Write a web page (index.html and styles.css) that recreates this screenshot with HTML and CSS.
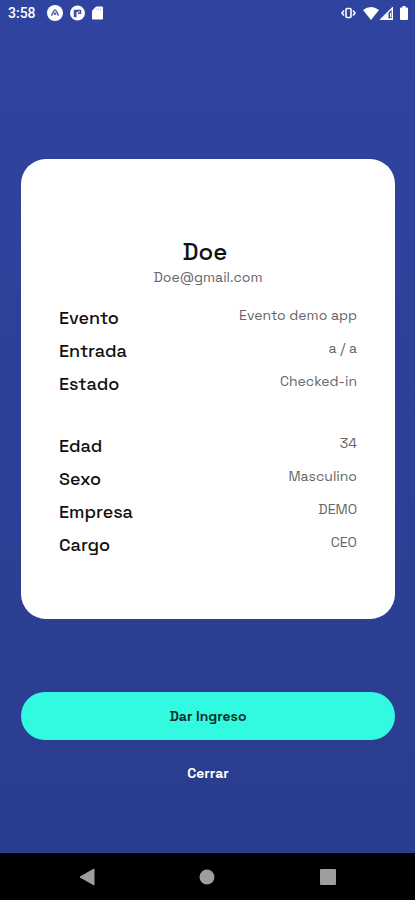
FILE: index.html
```
<!DOCTYPE html>
<html lang="es">
<head>
    <meta charset="UTF-8">
    <meta name="viewport" content="width=device-width, initial-scale=1.0">
    <title>Dar Ingreso</title>
    <link rel="stylesheet" href="styles.css">
</head>
<body>
    <!-- Status bar -->
    <header class="status-bar">
        <div class="status-left">
            <span class="time">3:58</span>
            <svg width="16" height="16" viewBox="0 0 16 16">
                <circle cx="8" cy="8" r="8" fill="#fff"/>
                <path d="M4.500 10.800Q6.800 5 8 5t3.500 5.800M7 9.500 8 8l1 1.500" fill="none" stroke="#5364b0" stroke-width="1.500"/>
            </svg>
            <svg width="15" height="16" viewBox="0 0 16 16">
                <circle cx="8" cy="8" r="8" fill="#fff"/>
                <path d="M4 4.500H12V9H8.500V7H7V12.500H4z" fill="#3f51a8"/>
                <path d="M8.800 6h1.700v1.500H8.800z" fill="#fff"/>
            </svg>
            <svg width="11" height="14" viewBox="0 0 12 14">
                <path d="M4.500 0H11q1 0 1 1v12q0 1-1 1H1q-1 0-1-1V4.500z" fill="#fff"/>
                <path d="M5 2v2M7.200 2v2M9.400 2v2" stroke="#c3c9e8"/>
            </svg>
        </div>
        <div class="status-right">
            <svg class="vibrate" width="15" height="12" viewBox="0 0 15 12">
                <rect x="5" y="1.500" width="5" height="9" rx="1" fill="none" stroke="#fff" stroke-width="1.600"/>
                <path d="M3 3.500 1 6l2 2.500M12 3.500 14 6l-2 2.500" fill="none" stroke="#fff" stroke-width="1.600"/>
            </svg>
            <svg width="16" height="13" viewBox="0 0 16 13">
                <path d="M0 3Q8-3 16 3L8 13z" fill="#fff"/>
            </svg>
            <svg width="13" height="13" viewBox="0 0 13 13">
                <path d="M12.300 1v11.300H1z" fill="none" stroke="#fff" stroke-width="1.400"/>
                <path d="M1 13 8.500 5.500V13z" fill="#fff"/>
                <path d="M10.500 6v4M10.500 11v1" stroke="#fff"/>
            </svg>
            <svg class="battery" width="8" height="14" viewBox="0 0 8 14">
                <path d="M2.500 0h3v1.500H7q1 0 1 1V13q0 1-1 1H1q-1 0-1-1V2.500q0-1 1-1h1.500z" fill="#fff"/>
            </svg>
        </div>
    </header>

    <main class="container">
        <!-- Attendee card -->
        <section class="card">
            <h1>Doe&nbsp;</h1>
            <p class="email">Doe@gmail.com</p>
            <dl class="details">
                <div class="row"><dt>Evento</dt><dd>Evento demo app</dd></div>
                <div class="row"><dt>Entrada</dt><dd>a / a</dd></div>
                <div class="row"><dt>Estado</dt><dd>Checked-in</dd></div>
            </dl>
            <dl class="details">
                <div class="row"><dt>Edad</dt><dd>34</dd></div>
                <div class="row"><dt>Sexo</dt><dd>Masculino</dd></div>
                <div class="row"><dt>Empresa</dt><dd>DEMO</dd></div>
                <div class="row"><dt>Cargo</dt><dd>CEO</dd></div>
            </dl>
        </section>

        <!-- Actions -->
        <div class="actions">
            <button type="button" class="btn-primary">Dar Ingreso</button>
            <button type="button" class="btn-link">Cerrar</button>
        </div>
    </main>

    <!-- System navigation -->
    <nav class="nav-bar">
        <button type="button" aria-label="Atrás">
            <svg width="16" height="18" viewBox="0 0 16 18"><path d="M1 9 15 1v16z" fill="#9e9e9e" stroke="#9e9e9e" stroke-linejoin="round"/></svg>
        </button>
        <button type="button" aria-label="Inicio">
            <svg width="16" height="16" viewBox="0 0 16 16"><circle cx="8" cy="8" r="7.500" fill="#9e9e9e"/></svg>
        </button>
        <button type="button" aria-label="Recientes">
            <svg width="16" height="16" viewBox="0 0 16 16"><rect width="16" height="16" rx="1" fill="#9e9e9e"/></svg>
        </button>
    </nav>
</body>
</html>
```
FILE: styles.css
```
* {
    margin: 0;
    padding: 0;
    box-sizing: border-box;
}

body {
    display: flex;
    flex-direction: column;
    min-height: 100vh;
    background: linear-gradient(#2f44a0, #2a3c8c);
    font-family: "Space Grotesk", Inter, sans-serif;
}

button {
    border: none;
    background: none;
    font-family: inherit;
    cursor: pointer;
}

svg {
    display: block;
}

/* Status bar */
.status-bar {
    display: flex;
    justify-content: space-between;
    align-items: center;
    height: 26px;
    padding: 0 7px 0 8px;
    color: #fff;
}

.status-left,
.status-right {
    display: flex;
    align-items: center;
}

.status-left {
    gap: 7px;
}

.status-right {
    gap: 1px;
}

.time {
    margin-right: 4px;
    font-family: Roboto, sans-serif;
    font-size: 14px;
    font-weight: 500;
}

.vibrate {
    margin-right: 6px;
}

.battery {
    margin-left: 6px;
}

/* Main content */
.container {
    flex: 1;
    display: flex;
    flex-direction: column;
    padding: 133px 20px 64px 21px;
}

.card {
    padding: 78px 38px 62px;
    background-color: #fff;
    border-radius: 25px;
}

.card h1 {
    font-size: 24px;
    font-weight: 500;
    line-height: 30px;
    text-align: center;
    color: #111;
}

.email {
    font-size: 14px;
    line-height: 20px;
    text-align: center;
    color: #666;
}

.details {
    display: flex;
    flex-direction: column;
    gap: 9px;
    margin-top: 19px;
}

.details + .details {
    margin-top: 38px;
}

.row {
    display: flex;
    justify-content: space-between;
    align-items: flex-start;
}

.row dt {
    font-size: 18px;
    font-weight: 500;
    line-height: 24px;
    color: #111;
}

.row dd {
    font-size: 14px;
    line-height: 18px;
    color: #666;
}

/* Actions */
.actions {
    display: flex;
    flex-direction: column;
    align-items: center;
    gap: 18px;
    margin-top: 73px;
}

.btn-primary {
    width: 100%;
    height: 48px;
    border-radius: 24px;
    background-color: #32fae0;
    color: #10302f;
    font-size: 14px;
    font-weight: 600;
}

.btn-link {
    height: 30px;
    padding: 0 16px;
    color: #fff;
    font-size: 14px;
    font-weight: 600;
}

/* System navigation */
.nav-bar {
    display: flex;
    justify-content: space-around;
    align-items: center;
    height: 47px;
    padding: 0 27px;
    background-color: #000;
}

.nav-bar button {
    display: flex;
    justify-content: center;
    width: 40px;
}
```
